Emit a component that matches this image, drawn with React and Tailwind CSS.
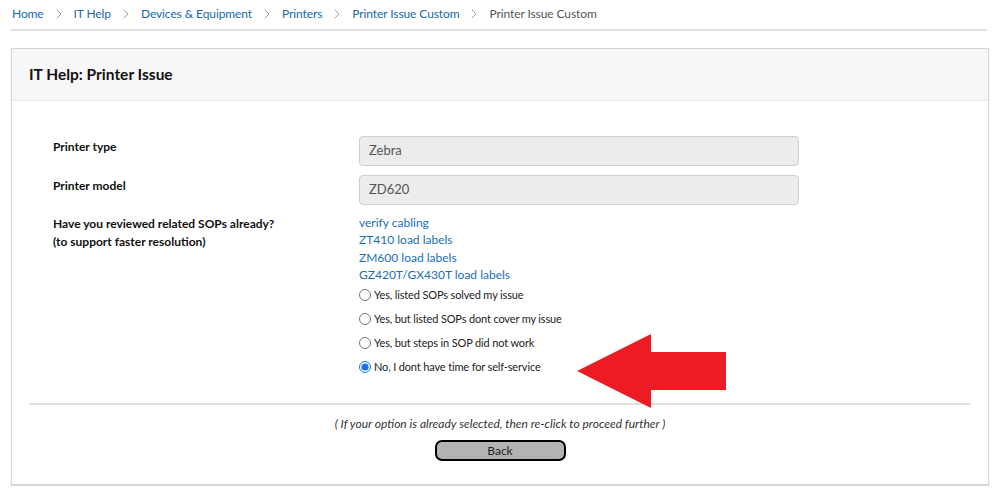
import { ChevronRight } from 'lucide-react'

const CRUMBS = ['Home', 'IT Help', 'Devices & Equipment', 'Printers', 'Printer Issue Custom']

const SOPS = ['verify cabling', 'ZT410 load labels', 'ZM600 load labels', 'GZ420T/GX430T load labels']

const OPTIONS = [
  { label: 'Yes, listed SOPs solved my issue' },
  { label: 'Yes, but listed SOPs dont cover my issue' },
  { label: 'Yes, but steps in SOP did not work' },
  { label: 'No, I dont have time for self-service', checked: true },
]

function Field({ label, value }) {
  return (
    <>
      <div className="text-[12px] font-bold text-[#111] pt-[2px]">{label}</div>
      <div className="h-[30px] rounded-[4px] border border-[#cfcfcf] bg-[#ececec] px-[9px] flex items-center text-[13px] text-[#555]">
        {value}
      </div>
    </>
  )
}

export default function App() {
  return (
    <div className="min-h-[500px] bg-white px-[11px] font-['Lato','Noto_Sans',sans-serif]">
      {/* Breadcrumb */}
      <div className="flex items-center h-[27px] pl-[1px] text-[12px] tracking-[-0.1px]">
        {CRUMBS.map((c) => (
          <span key={c} className="flex items-center">
            <span className="text-[#1668b0]">{c}</span>
            <ChevronRight className="w-4 h-4 mx-[7px] text-[#999]" strokeWidth={1.4} />
          </span>
        ))}
        <span className="text-[#555]">Printer Issue Custom</span>
      </div>
      <div className="h-[2px] bg-[#dedede] mt-[2px] w-[976px]" />

      {/* Card */}
      <div className="relative mt-[17px] w-[978px] border border-[#d5d5d5] shadow-[0_1px_1px_rgba(0,0,0,0.15)]">
        <div className="h-[52px] bg-[#f7f7f7] border-b border-[#ebebeb] flex items-center pl-[17px] text-[15.5px] font-bold text-[#111]">
          IT Help: Printer Issue
        </div>

        <div className="pt-[35px] pl-[41px]">
          <div className="grid grid-cols-[306px_440px] gap-y-[9px]">
            <Field label="Printer type" value="Zebra" />
            <Field label="Printer model" value="ZD620" />

            <div className="text-[12px] font-bold text-[#111] leading-[18px] pt-[1px]">
              <div>Have you reviewed related SOPs already?</div>
              <div>(to support faster resolution)</div>
            </div>
            <div>
              <div className="text-[12px] leading-[17.3px] text-[#1a6fba]">
                {SOPS.map((s) => (
                  <div key={s}>{s}</div>
                ))}
              </div>
              <div className="mt-[4px] flex flex-col gap-[8px] text-[11px] tracking-[-0.15px] text-[#222]">
                {OPTIONS.map((o) => (
                  <label key={o.label} className="flex items-center h-[16px]">
                    <input
                      type="radio"
                      name="sop"
                      defaultChecked={o.checked}
                      className="m-0 mr-[3px] w-[12px] h-[12px] accent-[#1a73e8]"
                    />
                    {o.label}
                  </label>
                ))}
              </div>
            </div>
          </div>
        </div>

        <div className="mt-[28px] mx-[17px] h-[2px] bg-[#e0e0e0] w-[941px]" />

        <div className="mt-[10px] text-center text-[12px] italic text-[#333]">
          ( If your option is already selected, then re-click to proceed further )
        </div>

        <div className="flex justify-center mt-[7px] pb-[23px]">
          <button className="w-[131px] h-[21px] rounded-[7px] border-2 border-black bg-[#b3b3b3] text-[12px] text-[#222] leading-none">
            Back
          </button>
        </div>

        {/* annotation arrow */}
        <svg
          className="absolute left-[565px] top-[285px]"
          width="150"
          height="75"
          viewBox="0 0 150 75"
        >
          <polygon points="0,37 74,0 74,18 149,18 149,56 74,56 74,74" fill="#ed1c24" />
        </svg>
      </div>
    </div>
  )
}
